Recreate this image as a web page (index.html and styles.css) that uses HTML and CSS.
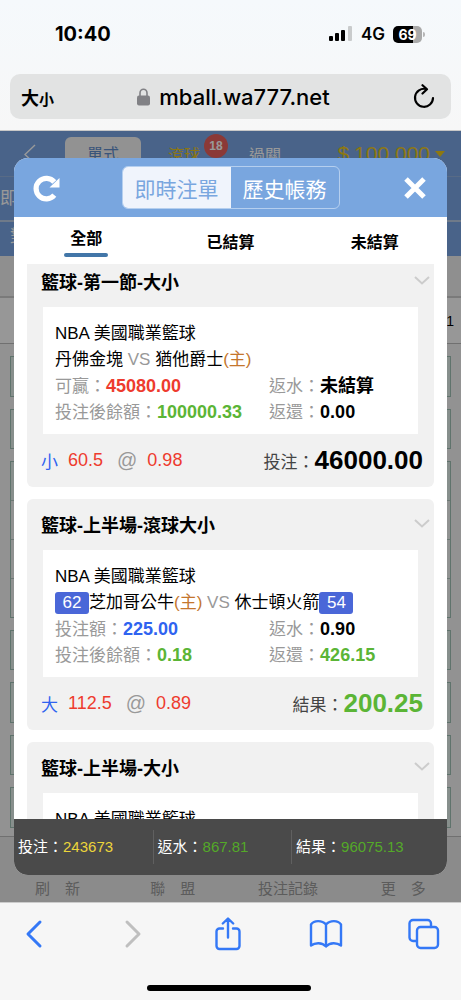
FILE: index.html
```html
<!DOCTYPE html>
<html lang="zh-Hant">
<head>
<meta charset="utf-8">
<meta name="viewport" content="width=device-width, initial-scale=1">
<title>即時注單</title>
<link rel="stylesheet" href="styles.css">
</head>
<body>
<div class="phone">
  <header class="browser-top">
    <div class="status">
      <time class="clock">10:40</time>
      <div class="status-right">
        <svg class="signal" width="24" height="16" viewBox="0 0 24 16"><rect x="0" y="10" width="4" height="5" rx="1"/><rect x="6" y="7" width="4" height="8" rx="1"/><rect x="12" y="4" width="4" height="11" rx="1"/><rect x="19" y="0" width="4" height="15" rx="1" fill="#c9cbcc"/></svg>
        <span class="network">4G</span>
        <span class="battery"><span class="battery-level">69</span></span>
      </div>
    </div>
    <div class="address">
      <button class="plain text-size" type="button">大<small>小</small></button>
      <div class="domain">
        <svg width="13" height="18" viewBox="0 0 13 18"><path d="M3 8V5a3.500 3.800 0 0 1 7 0v3" fill="none" stroke="#818185" stroke-width="1.6"/><rect x="0" y="7.500" width="13" height="10" rx="2" fill="#818185"/></svg>
        <span>mball.wa777.net</span>
      </div>
      <button class="plain reload" type="button" aria-label="重新載入">
        <svg width="22" height="25" viewBox="0 0 22 25" fill="none" stroke="#000" stroke-width="2.2" stroke-linecap="round" stroke-linejoin="round"><path d="M13 5A9 9 0 1 0 20 14"/><path d="M9.500 1.200L14 5.200L9.500 9.500"/></svg>
      </button>
    </div>
  </header>

  <main class="stage">
    <div class="site" aria-hidden="true">
      <div class="site-head">
        <div class="site-nav">
          <svg class="site-back" width="12" height="20" viewBox="0 0 12 20" fill="none" stroke="#fff" stroke-width="1.4"><path d="M11 1L1 10.500L11 20"/></svg>
          <span class="site-pill">單式</span>
          <span class="site-live">滾球<span class="site-badge">18</span></span>
          <span class="site-parlay">過關</span>
          <span class="site-money"><span>$</span><span>100,000</span><i class="caret"></i></span>
        </div>
        <div class="site-sub">即時</div>
        <div class="site-league">對</div>
      </div>
      <div class="site-gap"></div>
      <div class="site-match">1</div>
      <div class="site-list">
        <div class="slot"></div>
        <div class="slot"></div>
        <div class="slot-group"><i></i><i></i><i></i><i></i></div>
        <div class="slot"></div>
        <div class="slot"></div>
        <div class="slot"></div>
        <div class="slot"></div>
      </div>
      <div class="site-foot"><span>刷　新</span><span>聯　盟</span><span>投注記錄</span><span>更　多</span></div>
    </div>

    <section class="dialog" role="dialog" aria-label="即時注單">
      <div class="dialog-head">
        <button class="plain head-btn" type="button" aria-label="刷新">
          <svg width="28" height="28" viewBox="0 0 28 28"><path d="M22.300 21.200A10.300 10.300 0 1 1 22.300 8" fill="none" stroke="#fff" stroke-width="5.2"/><path d="M27.500 4V13.500H17.500Z" fill="#fff"/></svg>
        </button>
        <div class="segment">
          <button class="seg seg-on" type="button">即時注單</button>
          <button class="seg" type="button">歷史帳務</button>
        </div>
        <button class="plain head-btn" type="button" aria-label="關閉">
          <svg width="22" height="22" viewBox="0 0 22 22" stroke="#fff" stroke-width="5"><path d="M2 2L20 20M20 2L2 20"/></svg>
        </button>
      </div>
      <nav class="tabs">
        <button class="tab tab-on" type="button">全部</button>
        <button class="tab" type="button">已結算</button>
        <button class="tab" type="button">未結算</button>
      </nav>

      <div class="bets">
        <article class="bet bet-scrolled">
          <h2 class="bet-title">籃球-第一節-大小<svg width="16" height="9" viewBox="0 0 16 9"><path d="M1 1L8 7.500L15 1"/></svg></h2>
          <div class="slip">
            <p>NBA 美國職業籃球</p>
            <p>丹佛金塊 <span class="mute">VS</span> 猶他爵士<span class="home">(主)</span></p>
            <p class="pair"><span>可贏：<b class="red">45080.00</b></span><span>返水：<b>未結算</b></span></p>
            <p class="pair"><span>投注後餘額：<b class="green">100000.33</b></span><span>返還：<b>0.00</b></span></p>
          </div>
          <div class="bet-foot">
            <span class="side">小</span><span class="odds">60.5</span><span class="at">@</span><span class="odds">0.98</span>
            <span class="total">投注：<b>46000.00</b></span>
          </div>
        </article>

        <article class="bet">
          <h2 class="bet-title">籃球-上半場-滾球大小<svg width="16" height="9" viewBox="0 0 16 9"><path d="M1 1L8 7.500L15 1"/></svg></h2>
          <div class="slip">
            <p>NBA 美國職業籃球</p>
            <p><span class="score">62</span>芝加哥公牛<span class="home">(主)</span> <span class="mute">VS</span> 休士頓火箭<span class="score">54</span></p>
            <p class="pair"><span>投注額：<b class="blue">225.00</b></span><span>返水：<b>0.90</b></span></p>
            <p class="pair"><span>投注後餘額：<b class="green">0.18</b></span><span>返還：<b class="green">426.15</b></span></p>
          </div>
          <div class="bet-foot">
            <span class="side">大</span><span class="odds">112.5</span><span class="at">@</span><span class="odds">0.89</span>
            <span class="total">結果：<b class="green">200.25</b></span>
          </div>
        </article>

        <article class="bet">
          <h2 class="bet-title">籃球-上半場-大小<svg width="16" height="9" viewBox="0 0 16 9"><path d="M1 1L8 7.500L15 1"/></svg></h2>
          <div class="slip">
            <p>NBA 美國職業籃球</p>
          </div>
        </article>
      </div>

      <footer class="sums">
        <div>投注：<span class="sum-stake">243673</span></div>
        <div>返水：<span class="sum-green">867.81</span></div>
        <div>結果：<span class="sum-green">96075.13</span></div>
      </footer>
    </section>
  </main>

  <footer class="browser-bottom">
    <nav class="tools">
      <button class="plain" type="button" aria-label="上一頁"><svg width="32" height="32" viewBox="0 0 32 32"><path d="M22 4L10 16L22 28" stroke-width="3"/></svg></button>
      <button class="plain off" type="button" aria-label="下一頁" disabled><svg width="32" height="32" viewBox="0 0 32 32"><path d="M12 4L24 16L12 28" stroke-width="3"/></svg></button>
      <button class="plain" type="button" aria-label="分享"><svg width="32" height="36" viewBox="0 0 32 36"><path d="M11 12.500H7.500a3 3 0 0 0-3 3V30a3 3 0 0 0 3 3h17a3 3 0 0 0 3-3V15.500a3 3 0 0 0-3-3H21M16 21.500V3M10.800 7.500L16 2.500L21.200 7.500"/></svg></button>
      <button class="plain" type="button" aria-label="書籤"><svg width="34" height="32" viewBox="0 0 34 32"><path d="M17 6.500C13 2 5 2 2 6.500V27.500C6 24.500 13 24 17 28.500C21 24 28 24.500 32 27.500V6.500C29 2 21 2 17 6.500V28"/></svg></button>
      <button class="plain" type="button" aria-label="分頁"><svg width="32" height="32" viewBox="0 0 32 32"><path d="M8.500 23H5a3.500 3.500 0 0 1-3.500-3.500V5.500A3.500 3.500 0 0 1 5 2h14.500a3.500 3.500 0 0 1 3.500 3.500V9"/><rect x="9" y="9" width="21" height="21" rx="3.500"/></svg></button>
    </nav>
    <div class="home-bar"></div>
  </footer>
</div>
</body>
</html>
```

FILE: styles.css
```css
* { box-sizing: border-box; }

body {
  margin: 0;
  font-family: "Liberation Sans", "Noto Sans CJK TC", sans-serif;
  font-size: 17px;
  color: #000;
}

p, h2 { margin: 0; }
svg { display: block; flex: none; }

button { font: inherit; color: inherit; cursor: pointer; }

.plain {
  padding: 0;
  border: 0;
  background: none;
}

.phone {
  display: flex;
  flex-direction: column;
  min-height: 100vh;
  background: #f6f6f6;
}

/* Browser chrome, top */
.browser-top {
  padding: 22px 10px 11px;
  background: linear-gradient(#f5f9fc, #f7f7f7);
  border-bottom: 1px solid #c8c8c8;
  font-family: Inter, "Noto Sans CJK TC", sans-serif;
}

.status {
  display: flex;
  align-items: center;
  justify-content: space-between;
  height: 24px;
  margin-bottom: 28px;
  padding: 0 29px 0 45px;
}

.clock { font-size: 20px; font-weight: 700; }

.status-right {
  display: flex;
  align-items: center;
  gap: 8px;
}

.network { font-size: 17px; font-weight: 600; }

.battery {
  position: relative;
  width: 29px;
  height: 17px;
  border-radius: 5px;
  background: linear-gradient(90deg, #000 69%, #a9a9a9 69%);
  color: #fff;
  font-size: 14px;
  font-weight: 700;
  line-height: 17px;
  text-align: center;
}

.battery::after {
  content: "";
  position: absolute;
  right: -3px;
  top: 6px;
  width: 2px;
  height: 5px;
  border-radius: 0 2px 2px 0;
  background: #b5b5b5;
}

.address {
  display: flex;
  align-items: center;
  justify-content: space-between;
  height: 45px;
  padding: 0 16px 0 11px;
  border-radius: 10px;
  background: #e2e3e3;
}

.text-size { font-size: 18px; font-weight: 700; }
.text-size small { font-size: 15px; }

.domain {
  display: flex;
  align-items: center;
  gap: 9px;
  font-size: 22px;
  font-weight: 500;
}

/* Dimmed site behind the dialog */
.stage {
  position: relative;
  display: flex;
  flex: 1;
}

.site {
  display: flex;
  flex: 1;
  flex-direction: column;
  min-width: 0;
  overflow: hidden;
  background: #f4f4f4;
}

.site::after {
  content: "";
  position: absolute;
  inset: 0;
  background: rgba(0, 0, 0, 0.4);
}

.site-head { background: #7aa6e4; color: #fff; }

.site-nav {
  display: flex;
  align-items: center;
  height: 46px;
  padding: 0 16px 0 24px;
  border-bottom: 1px solid #93b3df;
  font-size: 16px;
}

.site-pill {
  width: 76px;
  height: 36px;
  margin: 3px 27px 0 29px;
  border-radius: 6px;
  background: #f4f4f4;
  color: #5f8ccc;
  line-height: 36px;
  text-align: center;
}

.site-live { position: relative; margin-right: 49px; color: #e8c520; }

.site-badge {
  position: absolute;
  left: 36px;
  top: -8px;
  width: 24px;
  height: 24px;
  border-radius: 50%;
  background: #e8605c;
  color: #fff;
  font-size: 12px;
  font-weight: 700;
  line-height: 24px;
  text-align: center;
}

.site-money {
  display: flex;
  align-items: center;
  gap: 5px;
  margin-left: auto;
  color: #ecc81c;
  font-size: 21px;
}

.caret {
  border: 5px solid transparent;
  border-top: 6px solid #ecc81c;
  border-bottom: 0;
}

.site-sub {
  height: 45px;
  border-bottom: 2px solid #b9cbe5;
  line-height: 44px;
}

.site-league {
  height: 34px;
  padding-left: 10px;
  line-height: 30px;
}

.site-gap { height: 42px; background: #eee; border-bottom: 2px solid #ccc; }

.site-match {
  height: 46px;
  padding-right: 7px;
  border-bottom: 1px solid #bbb;
  background: #fcfcfc;
  font-size: 14px;
  line-height: 46px;
  text-align: right;
}

.site-list {
  display: flex;
  flex: 1;
  flex-direction: column;
  gap: 12px;
  padding: 12px 10px 8px;
}

.slot { flex: 1; border: 1px solid #9fc0b5; background: #e2eeea; }

.slot-group {
  display: flex;
  flex: 4;
  flex-direction: column;
  border: 1px solid #9fc0b5;
}

.slot-group i { flex: 1; border-bottom: 1px solid #b5c9c2; background: #f0f4f2; }
.slot-group i:last-child { border-bottom: 0; }
.slot-group i:first-child { background: #e2eeea; }

.site-foot {
  display: flex;
  align-items: flex-end;
  height: 66px;
  padding-bottom: 4px;
  border-top: 1px solid #bbb;
  background: #e8e8e8;
  color: #999;
  font-size: 15px;
}

.site-foot span { flex: 1; text-align: center; }

/* Dialog */
.dialog {
  position: absolute;
  inset: 27px 14px;
  display: flex;
  flex-direction: column;
  overflow: hidden;
  border-radius: 14px;
  background: #fff;
}

.dialog-head {
  display: flex;
  flex: none;
  align-items: center;
  justify-content: space-between;
  height: 59px;
  padding: 0 16px;
  background: #79a6df;
}

.head-btn {
  display: flex;
  justify-content: center;
  width: 32px;
}

.segment {
  display: flex;
  height: 43px;
  overflow: hidden;
  border: 1px solid #b5cfef;
  border-radius: 6px;
}

.seg {
  width: 108px;
  padding: 0;
  border: 0;
  background: none;
  color: #fff;
  font-size: 21px;
}

.seg-on { background: #f0f4fc; color: #79a6df; }

.tabs {
  display: flex;
  flex: none;
  justify-content: space-around;
  height: 47px;
}

.tab {
  flex: 1;
  padding: 0;
  border: 0;
  background: none;
  font-size: 16px;
  font-weight: 700;
}

.tab-on {
  display: flex;
  flex-direction: column;
  align-items: center;
  gap: 4px;
  padding-top: 8px;
}

.tab-on::after {
  content: "";
  width: 44px;
  height: 4px;
  border-radius: 2px;
  background: #4276a8;
}

.bets {
  display: flex;
  flex: 1;
  flex-direction: column;
  gap: 12px;
  min-height: 0;
  overflow: hidden;
  padding: 0 13px;
}

.bet {
  flex: none;
  padding: 0 16px;
  border-radius: 6px;
  background: #f1f1f1;
}

.bet-title {
  display: flex;
  align-items: center;
  justify-content: space-between;
  height: 51px;
  margin: 0 -12px 0 -2px;
  padding-bottom: 2px;
  font-size: 18px;
}

.bet-title path { fill: none; stroke: #ccc; stroke-width: 2; }

.bet-scrolled { border-radius: 0 0 6px 6px; }
.bet-scrolled .bet-title { height: 43px; padding-bottom: 10px; }

.slip {
  padding: 14px 12px 9px;
  background: #fff;
  line-height: 26px;
  white-space: nowrap;
}

.slip p { height: 26px; }

.pair {
  display: grid;
  grid-template-columns: 61% 1fr;
  color: #999;
}

.pair b { color: #000; font-size: 18px; }
.mute { color: #999; }
.home { color: #c4762d; }
.odds { color: #ee3b2e; font-size: 18px; }
.pair .red { color: #ee3b2e; }
.pair .green, .total .green { color: #5bb536; }
.pair .blue, .side { color: #2f63f0; }

.score {
  display: inline-block;
  width: 34px;
  height: 22px;
  border-radius: 3px;
  background: #4a67d8;
  color: #fff;
  line-height: 22px;
  text-align: center;
}

.bet-foot {
  display: flex;
  align-items: center;
  height: 53px;
  margin: 0 -5px 0 -2px;
}

.side { margin-right: 10px; }
.at { margin: 0 10px 0 14px; color: #999; font-size: 20px; }

.total {
  display: flex;
  align-items: center;
  margin-left: auto;
  color: #444;
}

.total b { color: #000; font-size: 26px; }

.sums {
  display: grid;
  flex: none;
  grid-template-columns: 32% 32% 36%;
  align-items: center;
  height: 56px;
  background: #4a4a4a;
  color: #fff;
  font-size: 15px;
}

.sums div { padding-left: 4px; line-height: 34px; }
.sums div + div { border-left: 1px solid #606060; }
.sum-stake { color: #ecd53a; }
.sum-green { color: #54a928; }

/* Browser chrome, bottom */
.browser-bottom {
  display: flex;
  flex-direction: column;
  align-items: center;
  justify-content: space-between;
  height: 98px;
  padding: 13px 21px 9px 18px;
  border-top: 1px solid #ccc;
}

.tools {
  display: flex;
  align-items: center;
  justify-content: space-between;
  align-self: stretch;
  height: 36px;
}

.tools path, .tools rect { fill: none; stroke: #3478f6; stroke-linecap: round; stroke-linejoin: round; }
.tools svg { stroke-width: 2.4px; }
.tools .off path { stroke: #bfbfbf; }

.home-bar {
  width: 164px;
  height: 6px;
  border-radius: 3px;
  background: #000;
}
```
